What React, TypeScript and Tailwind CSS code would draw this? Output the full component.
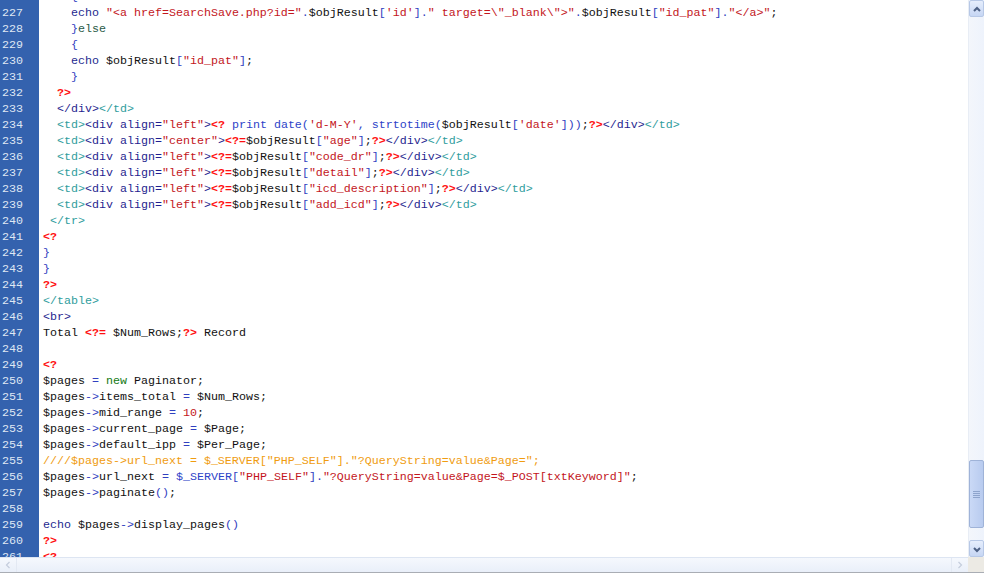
type Tok = [string, string]

const C: Record<string, string> = {
  k: 'text-[#1d2a8f]',
  e: 'text-[#2a5a46]',
  v: 'text-[#111111]',
  s: 'text-[#c3161c]',
  p: 'text-[#3040c0]',
  t: 'text-[#ff1010] font-bold',
  h: 'text-[#2f9d9d]',
  d: 'text-[#1f1f8f]',
  n: 'text-[#137a13]',
  c: 'text-[#f09c10]',
  f: 'text-[#2d43c8]',
}

const tdRow = (align: string, key: string): Tok[] => [
  ['  ', 'v'],
  ['<td>', 'h'],
  ['<div align=', 'd'],
  [`"${align}"`, 's'],
  ['>', 'd'],
  ['<?=', 't'],
  ['$objResult', 'v'],
  ['[', 'p'],
  [`"${key}"`, 's'],
  [']', 'p'],
  [';', 'v'],
  ['?>', 't'],
  ['</div>', 'd'],
  ['</td>', 'h'],
]

const lines: Tok[][] = [
  [['    {', 'p']],
  [
    ['    echo ', 'k'],
    ['"<a href=SearchSave.php?id="', 's'],
    ['.', 'p'],
    ['$objResult', 'v'],
    ['[', 'p'],
    ["'id'", 's'],
    [']', 'p'],
    ['.', 'p'],
    ['" target=\\"_blank\\">"', 's'],
    ['.', 'p'],
    ['$objResult', 'v'],
    ['[', 'p'],
    ['"id_pat"', 's'],
    [']', 'p'],
    ['.', 'p'],
    ['"</a>"', 's'],
    [';', 'v'],
  ],
  [['    }', 'p'], ['else', 'e']],
  [['    {', 'p']],
  [
    ['    echo ', 'k'],
    ['$objResult', 'v'],
    ['[', 'p'],
    ['"id_pat"', 's'],
    [']', 'p'],
    [';', 'v'],
  ],
  [['    }', 'p']],
  [['  ', 'v'], ['?>', 't']],
  [['  ', 'v'], ['</div>', 'd'], ['</td>', 'h']],
  [
    ['  ', 'v'],
    ['<td>', 'h'],
    ['<div align=', 'd'],
    ['"left"', 's'],
    ['>', 'd'],
    ['<?', 't'],
    [' print date(', 'f'],
    ["'d-M-Y'", 's'],
    [', strtotime(', 'f'],
    ['$objResult', 'v'],
    ['[', 'p'],
    ["'date'", 's'],
    [']))', 'p'],
    [';', 'v'],
    ['?>', 't'],
    ['</div>', 'd'],
    ['</td>', 'h'],
  ],
  tdRow('center', 'age'),
  tdRow('left', 'code_dr'),
  tdRow('left', 'detail'),
  tdRow('left', 'icd_description'),
  tdRow('left', 'add_icd'),
  [[' ', 'v'], ['</tr>', 'h']],
  [['<?', 't']],
  [['}', 'p']],
  [['}', 'p']],
  [['?>', 't']],
  [['</table>', 'h']],
  [['<br>', 'd']],
  [['Total ', 'v'], ['<?=', 't'], [' $Num_Rows;', 'v'], ['?>', 't'], [' Record', 'v']],
  [],
  [['<?', 't']],
  [['$pages ', 'v'], ['=', 'p'], [' ', 'v'], ['new', 'n'], [' Paginator;', 'v']],
  [['$pages', 'v'], ['->', 'p'], ['items_total ', 'v'], ['=', 'p'], [' $Num_Rows;', 'v']],
  [['$pages', 'v'], ['->', 'p'], ['mid_range ', 'v'], ['=', 'p'], [' ', 'v'], ['10', 's'], [';', 'v']],
  [['$pages', 'v'], ['->', 'p'], ['current_page ', 'v'], ['=', 'p'], [' $Page;', 'v']],
  [['$pages', 'v'], ['->', 'p'], ['default_ipp ', 'v'], ['=', 'p'], [' $Per_Page;', 'v']],
  [['////$pages->url_next = $_SERVER["PHP_SELF"]."?QueryString=value&Page=";', 'c']],
  [
    ['$pages', 'v'],
    ['->', 'p'],
    ['url_next ', 'v'],
    ['=', 'p'],
    [' ', 'v'],
    ['$_SERVER', 'f'],
    ['[', 'p'],
    ['"PHP_SELF"', 's'],
    [']', 'p'],
    ['.', 'p'],
    ['"?QueryString=value&Page=$_POST[txtKeyword]"', 's'],
    [';', 'v'],
  ],
  [['$pages', 'v'], ['->', 'p'], ['paginate', 'v'], ['()', 'p'], [';', 'v']],
  [],
  [['echo ', 'k'], ['$pages', 'v'], ['->', 'p'], ['display_pages', 'v'], ['()', 'p']],
  [['?>', 't']],
  [['<?', 't']],
]

const Chevron = ({ dir, faint }: { dir: 'up' | 'down' | 'left' | 'right'; faint?: boolean }) => {
  const pts = {
    up: '3,8 6,5 9,8',
    down: '3,5 6,8 9,5',
    left: '7.5,3 4.5,6 7.5,9',
    right: '4.5,3 7.5,6 4.5,9',
  }[dir]
  return (
    <svg width="12" height="12" viewBox="0 0 12 12">
      <polyline
        points={pts}
        fill="none"
        stroke={faint ? '#c4cddc' : '#4d6185'}
        strokeWidth={faint ? 1.2 : 2}
      />
    </svg>
  )
}

export default function App() {
  return (
    <div className="w-[984px] h-[573px] flex flex-col bg-white overflow-hidden font-['Liberation_Mono',monospace] text-[11.67px]">
      <div className="flex h-[557px]">
        {/* Editor */}
        <div className="flex-1 overflow-hidden">
          <div className="-mt-[11px]">
            {lines.map((toks, i) => (
              <div key={i} className="flex h-[16px] leading-[16px]">
                <div className="w-[39px] shrink-0 bg-[#3462ae] pl-[2px] text-[#dfe7f3]">
                  {226 + i}
                </div>
                <div className="pl-[4px] whitespace-pre">
                  {toks.map(([text, k], j) => (
                    <span key={j} className={C[k]}>
                      {text}
                    </span>
                  ))}
                </div>
              </div>
            ))}
          </div>
        </div>

        {/* Vertical scrollbar */}
        <div className="w-[16px] shrink-0 flex flex-col bg-gradient-to-r from-[#f3f6fb] to-[#eef3fc] border-l border-[#e8edf5]">
          <div className="h-[17px] flex items-center justify-center rounded-[2px] border border-[#b7c8e6] bg-gradient-to-b from-[#e6eefc] to-[#c6d6f4]">
            <Chevron dir="up" />
          </div>
          <div className="flex-1" />
          <div className="h-[68px] rounded-[2px] border border-[#9fb3d8] bg-gradient-to-r from-[#cad9f6] to-[#b8cbef] flex flex-col items-center justify-center gap-[1px]">
            <div className="w-[7px] h-px bg-[#8ea4cc]" />
            <div className="w-[7px] h-px bg-[#8ea4cc]" />
            <div className="w-[7px] h-px bg-[#8ea4cc]" />
            <div className="w-[7px] h-px bg-[#8ea4cc]" />
          </div>
          <div className="h-[12px]" />
          <div className="h-[17px] flex items-center justify-center rounded-[2px] border border-[#b7c8e6] bg-gradient-to-b from-[#e6eefc] to-[#c6d6f4]">
            <Chevron dir="down" />
          </div>
        </div>
      </div>

      {/* Horizontal scrollbar */}
      <div className="h-[16px] flex border-b border-[#a9adb4]">
        <div className="flex-1 flex bg-gradient-to-b from-[#f5f8fd] to-[#e9eff9] border-t border-[#dde5f2]">
          <div className="w-[17px] flex items-center justify-center border-r border-[#e3e9f3]">
            <Chevron dir="left" faint />
          </div>
          <div className="flex-1" />
          <div className="w-[17px] flex items-center justify-center border-l border-[#e3e9f3]">
            <Chevron dir="right" faint />
          </div>
        </div>
        <div className="w-[16px] bg-[#eceae4]" />
      </div>
    </div>
  )
}
